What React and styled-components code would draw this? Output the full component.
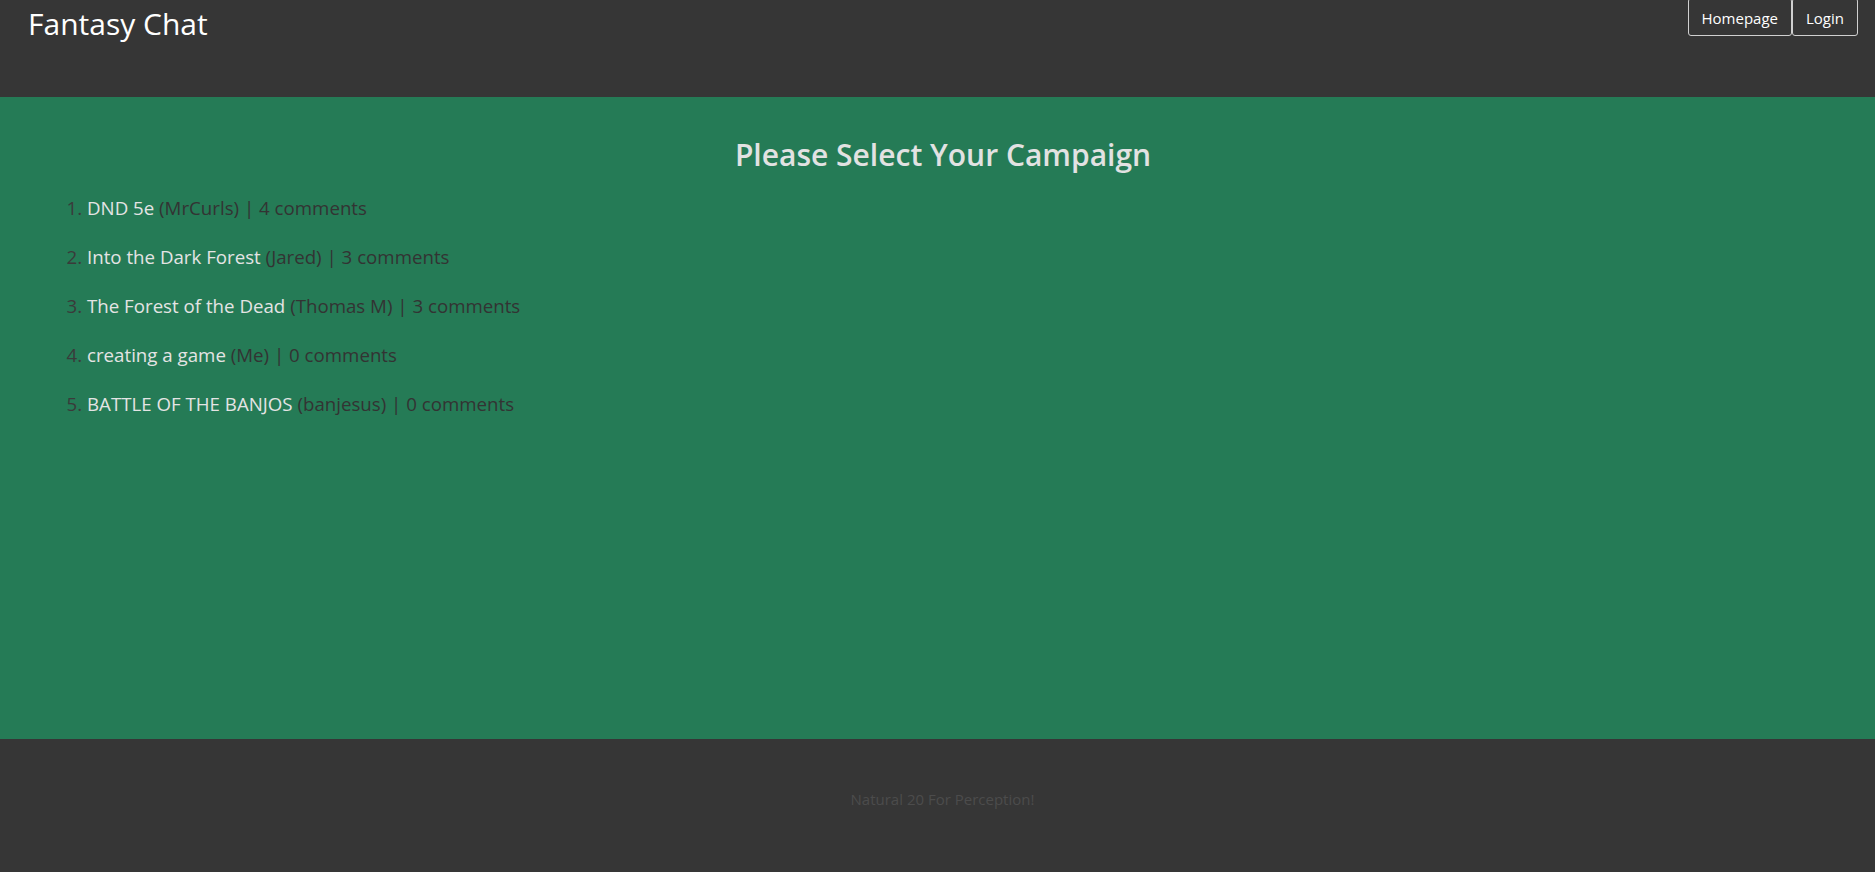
import React from "react";
import styled, { createGlobalStyle } from "styled-components";

const GlobalStyle = createGlobalStyle`
  body {
    margin: 0;
    font-family: "Open Sans", "Noto Sans", sans-serif;
    background-color: #363636;
  }
`;

const Page = styled.div`
  display: flex;
  flex-direction: column;
  min-height: 872px;
`;

const Header = styled.header`
  height: 97px;
  background-color: #363636;
  display: flex;
  justify-content: space-between;
  align-items: flex-start;
  padding: 0 17px 0 28px;
  box-sizing: border-box;
`;

const Brand = styled.h1`
  margin: 0;
  padding-top: 2px;
  font-size: 30px;
  font-weight: 400;
  line-height: 44px;
  color: #fff;
`;

const Nav = styled.nav`
  display: flex;
  margin-top: -2px;
`;

const NavButton = styled.button`
  background: transparent;
  color: #fff;
  font-family: inherit;
  font-size: 15px;
  height: 38px;
  padding: 2px 13px 0;
  border: 1px solid #d0d0d0;
  border-radius: 3px;
  cursor: pointer;
`;

const Main = styled.main`
  height: 642px;
  background-color: #257b56;
  padding-top: 38px;
  box-sizing: border-box;
`;

const Title = styled.h2`
  margin: 0 0 20px;
  padding-left: 11px;
  text-align: center;
  font-size: 30px;
  font-weight: 600;
  line-height: 40px;
  color: #e2e2e2;
`;

const CampaignList = styled.ol`
  margin: 0;
  padding-left: 87px;
  color: #333;
  font-size: 18.7px;
`;

const Item = styled.li`
  line-height: 25px;
  margin-bottom: 24px;
  &::marker {
    color: #3a3a3a;
  }
`;

const CampaignName = styled.a`
  color: #e4e4e4;
  text-decoration: none;
`;

const Meta = styled.span`
  color: #333;
`;

const Footer = styled.footer`
  flex: 1;
  height: 133px;
  display: flex;
  align-items: center;
  justify-content: center;
  color: #4c4c4c;
  font-size: 15px;
  padding: 0 0 14px 10px;
  box-sizing: border-box;
`;

const campaigns = [
  { name: "DND 5e", author: "MrCurls", comments: 4 },
  { name: "Into the Dark Forest", author: "Jared", comments: 3 },
  { name: "The Forest of the Dead", author: "Thomas M", comments: 3 },
  { name: "creating a game", author: "Me", comments: 0 },
  { name: "BATTLE OF THE BANJOS", author: "banjesus", comments: 0 },
];

const App = () => {
  return (
    <Page>
      <GlobalStyle />
      <Header>
        <Brand>Fantasy Chat</Brand>
        <Nav>
          <NavButton>Homepage</NavButton>
          <NavButton>Login</NavButton>
        </Nav>
      </Header>
      <Main>
        <Title>Please Select Your Campaign</Title>
        <CampaignList>
          {campaigns.map((c) => (
            <Item key={c.name}>
              <CampaignName href="#">{c.name}</CampaignName>{" "}
              <Meta>
                ({c.author}) | {c.comments} comments
              </Meta>
            </Item>
          ))}
        </CampaignList>
      </Main>
      <Footer>Natural 20 For Perception!</Footer>
    </Page>
  );
};

export default App;
